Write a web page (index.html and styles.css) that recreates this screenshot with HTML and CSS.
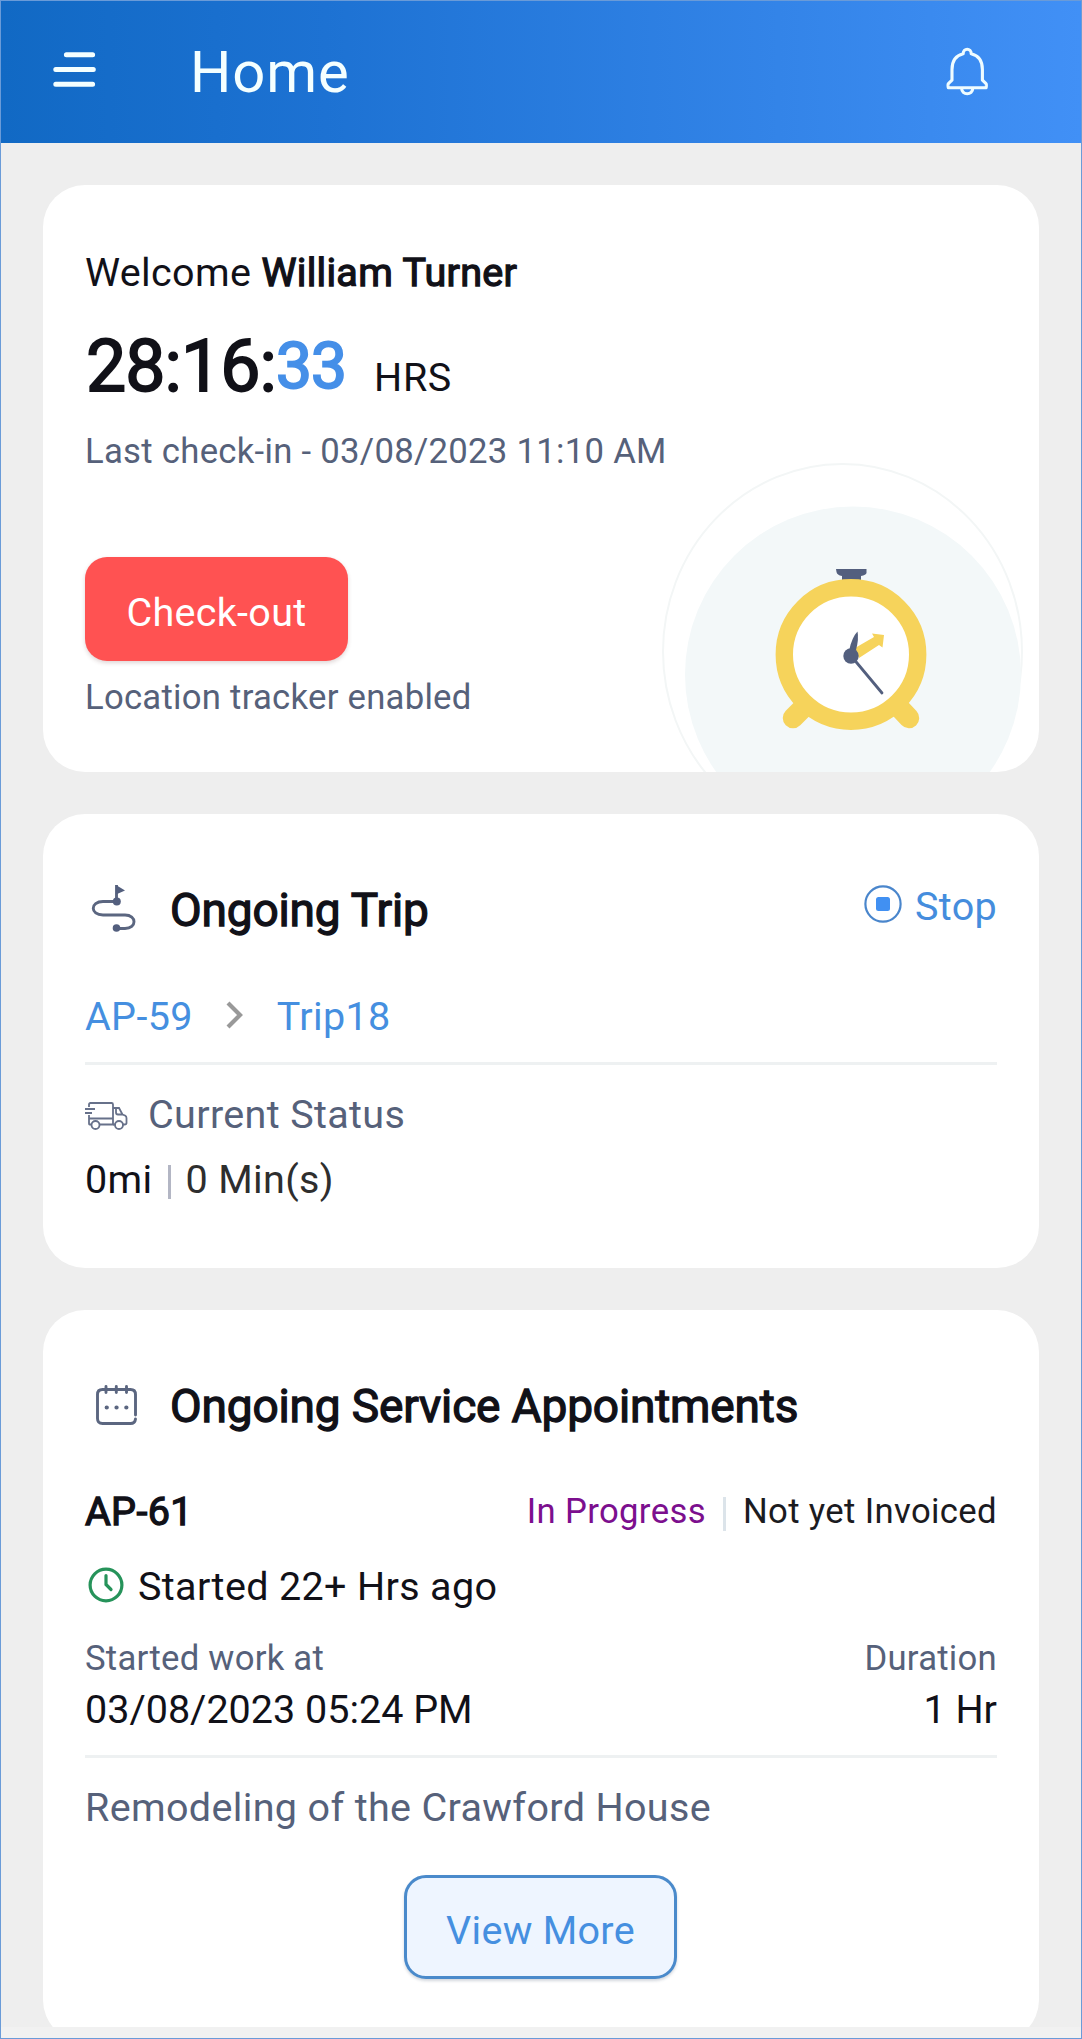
FILE: index.html
```html
<!DOCTYPE html>
<html lang="en">
<head>
<meta charset="utf-8">
<meta name="viewport" content="width=device-width, initial-scale=1">
<title>Home</title>
<link rel="stylesheet" href="styles.css">
</head>
<body>
<div class="screen">
  <header class="topbar">
    <svg class="menu-icon" width="44" height="36" viewBox="0 0 44 36" fill="none" stroke="#f4ffff" stroke-width="5" stroke-linecap="round">
      <path d="M13.4 2.7H39.6M2.8 17.4H40.3M2.8 32.3H39.6"/>
    </svg>
    <h1 class="topbar-title">Home</h1>
    <svg class="bell-icon" width="42" height="50" viewBox="0 0 42 50" fill="none" stroke="#effcff" stroke-width="3.1" stroke-linejoin="round">
      <path d="M17.2 6.7C17.2 .8 25.2 .8 25.2 6.7C32.6 8.4 36.4 14.2 36.4 22.5V33.2L39.8 36.4Q40.6 37.2 40.4 38.8L40.1 40.7H2.3L2 38.8Q1.8 37.2 2.6 36.4L6 33.2V22.5C6 14.2 9.8 8.4 17.2 6.7Z"/>
      <path d="M15.6 41C15.6 48.6 26.8 48.6 26.8 41"/>
    </svg>
  </header>

  <main class="content">
    <section class="card welcome-card">
      <p class="text welcome">Welcome <b class="strong name">William Turner</b></p>
      <p class="timer"><span class="timer-hm">28:16:</span><span class="timer-s">33</span><span class="timer-unit">HRS</span></p>
      <p class="note checkin">Last check-in - 03/08/2023 11:10 AM</p>
      <button class="button checkout" type="button">Check-out</button>
      <p class="note tracker">Location tracker enabled</p>
      <svg class="clock-art" width="378" height="312" viewBox="0 0 378 312">
        <ellipse cx="181.5" cy="191.500" rx="179.500" ry="187.500" fill="none" stroke="#f3f6f6" stroke-width="2"/>
        <circle cx="192" cy="214.500" r="168" fill="#f3f8f9"/>
        <path d="M175 109H205.500V113Q205 115 200 116V122H181V116Q176 115 175.500 112Z" fill="#535f7e"/>
        <path d="M149 241L132 258M232 241L248 258" stroke="#f6d35b" stroke-width="20.500" stroke-linecap="round"/>
        <circle cx="190" cy="194.500" r="66.700" fill="#fff" stroke="#f6d35b" stroke-width="17.400"/>
        <path d="M194 188L213 177L211 173.500L223 175L221.500 187.500L218 185L198 198Z" fill="#f6d35b"/>
        <path d="M188 191Q191 177 196.500 171.500Q198 179 195 190Z" fill="#535f7e"/>
        <circle cx="190" cy="196" r="7.700" fill="#535f7e"/>
        <path d="M191 197L221 233" stroke="#535f7e" stroke-width="2.800" stroke-linecap="round"/>
      </svg>
    </section>

    <section class="card trip-card">
      <div class="card-head">
        <svg class="head-icon" width="50" height="50" viewBox="0 0 50 50" fill="none" stroke="#5b6680" stroke-width="2.900">
          <path d="M31.700 19.500H18C5 19.500 5 33 18 33H40C52 33 52 46.500 40 46.500H31.700"/>
          <path d="M31.500 19V3"/>
          <path d="M31 3L40 8.500L31 12.500Z" fill="#535f7e" stroke="none"/>
          <circle cx="31.800" cy="19.500" r="4" fill="#535f7e" stroke="none"/>
          <circle cx="31.500" cy="46" r="3.800" fill="#535f7e" stroke="none"/>
        </svg>
        <h2 class="heading strong">Ongoing Trip</h2>
        <a class="stop">
          <svg width="38" height="38" viewBox="0 0 38 38"><circle cx="19" cy="19" r="17.600" fill="none" stroke="#4a86cc" stroke-width="2.200"/><rect x="12" y="12" width="14" height="14" rx="2.500" fill="#4190f2"/></svg>
          <span>Stop</span>
        </a>
      </div>
      <p class="crumbs text"><a>AP-59</a>
        <svg width="18" height="28" viewBox="0 0 18 28" fill="none" stroke="#999" stroke-width="4.200"><path d="M2 2L14 14L2 26"/></svg>
        <a>Trip18</a></p>
      <hr class="divider">
      <div class="status text">
        <svg width="43" height="30" viewBox="1 0 43 30" fill="none" stroke="#67718a" stroke-width="1.800">
          <path d="M5 6V3.500Q5 2 6.500 2H27.500Q29 2 29 3.500V23.500H16M7 23.500H5.500Q5 23.500 5 22.500V14M5 17.500H29M1 8H11M1 12H8"/>
          <path d="M29 7H35L38.500 13.500L41 14.500Q42.500 15.300 42.500 17V22Q42.500 23.500 40.500 23.500H39M29 23.500H31M32 7V11.500Q32 13.500 34 13.500H38.500"/>
          <circle cx="11.500" cy="24" r="4"/><circle cx="35" cy="24" r="4"/>
        </svg>
        <span>Current Status</span>
      </div>
      <div class="trip-stats text"><span>0mi</span><i class="bar"></i><span class="mins">0 Min(s)</span></div>
    </section>

    <section class="card service-card">
      <div class="card-head">
        <svg class="head-icon calendar" width="50" height="50" viewBox="0 0 50 50" fill="none" stroke="#5b6680" stroke-width="2.900" stroke-linecap="round">
          <path d="M50.500 34V13.500Q50.500 8.500 45.500 8.500H17.500Q12.500 8.500 12.500 13.500V37.500Q12.500 42.500 17.500 42.500H45.500Q50 42.500 50.500 38"/>
          <path d="M21 5.500V11.500M31.300 5.500V11.500M41.500 5.500V11.500"/>
          <path d="M21.700 26.500H21.800M31.500 26.500H31.600M41.300 26.500H41.400" stroke-width="4.200"/>
        </svg>
        <h2 class="heading strong">Ongoing Service Appointments</h2>
      </div>
      <div class="appointment">
        <span class="text strong ap-id">AP-61</span>
        <span class="progress">In Progress</span><i class="bar pale"></i><span class="invoice">Not yet Invoiced</span>
      </div>
      <p class="started text">
        <svg width="38" height="38" viewBox="0 0 38 38" fill="none" stroke="#26935a" stroke-width="3.200" stroke-linecap="round"><circle cx="19" cy="19" r="15.900"/><path d="M19 9.500V18.500L24 23.500"/></svg>
        <span>Started 22+ Hrs ago</span></p>
      <div class="row note work-labels"><span>Started work at</span><span>Duration</span></div>
      <div class="row text work-values"><span class="date">03/08/2023 05:24 PM</span><span class="hours">1 Hr</span></div>
      <hr class="divider">
      <p class="text project">Remodeling of the Crawford House</p>
      <button class="button view-more" type="button">View More</button>
    </section>
  </main>
  <div class="bottom-strip"></div>
</div>
</body>
</html>
```
FILE: styles.css
```css
* { box-sizing: border-box; }
body { margin: 0; font-family: Roboto, "Liberation Sans", sans-serif; color: #111118; }
h1, h2, p { margin: 0; font-weight: 400; }
svg { display: block; flex: none; overflow: visible; }

.screen {
  display: flex;
  flex-direction: column;
  height: 2039px;
  overflow: hidden;
  background: #eeeeee;
  border: 1px solid #6a9bd8;
}

.topbar {
  display: flex;
  align-items: flex-start;
  flex: none;
  height: 142px;
  padding: 0 93px 0 52px;
  background: linear-gradient(90deg, #1169c4, #1d72d3 30%, #3384e8 72%, #4190f6);
}
.menu-icon { margin-top: 51px; }
.topbar-title {
  flex: 1;
  margin-left: 93px;
  font-size: 58px;
  line-height: 72px;
  letter-spacing: 0.9px;
  color: #f4ffff;
  padding-top: 35px;
}
.bell-icon { margin-top: 46px; }

.content {
  display: flex;
  flex: 1;
  flex-direction: column;
  gap: 42px;
  min-height: 0;
  padding: 42px;
  overflow: hidden;
}
.card {
  position: relative;
  flex: none;
  padding: 0 42px;
  overflow: hidden;
  background: #fff;
  border-radius: 42px;
}
.welcome-card { height: 587px; padding-top: 62px; }
.trip-card { height: 454px; padding-top: 66px; }
.service-card { height: 732px; padding-top: 66px; }

.text { font-size: 39.5px; line-height: 52px; letter-spacing: 0.35px; white-space: nowrap; }
.note { font-size: 34.7px; line-height: 44px; letter-spacing: 0.25px; color: #56617a; white-space: nowrap; }
.strong { font-weight: 400; -webkit-text-stroke: 1.3px currentColor; }
.name { letter-spacing: 0.3px; }

.timer { display: flex; align-items: baseline; height: 84px; margin-top: 26px; line-height: 84px; white-space: nowrap; }
.timer-hm { margin-left: 1px; font-size: 71.5px; letter-spacing: -0.9px; -webkit-text-stroke: 1.8px currentColor; }
.timer-s { position: relative; top: -3px; font-size: 64px; letter-spacing: -0.9px; color: #458fe8; -webkit-text-stroke: 2px currentColor; }
.timer-unit { margin-left: 28px; font-size: 39.5px; letter-spacing: 0.6px; }
.checkin { margin-top: 20px; letter-spacing: 0.28px; }

.button {
  display: block;
  height: 104px;
  border-radius: 22px;
  font-family: inherit;
  font-size: 39.5px;
  line-height: 52px;
  letter-spacing: 0.3px;
  text-align: center;
  white-space: nowrap;
}
.checkout {
  width: 263px;
  margin-top: 84px;
  padding: 8px 0 0;
  color: #fff;
  background: #ff5252;
  border: 0;
  box-shadow: 0 2px 4px rgba(80, 30, 30, 0.18);
}
.tracker { margin-top: 14px; }
.clock-art { position: absolute; right: 0; bottom: 0; }

.card-head { display: flex; align-items: flex-start; height: 60px; }
.heading { flex: 1; margin-left: 35px; font-size: 46px; line-height: 60px; letter-spacing: -0.15px; white-space: nowrap; }
.head-icon { margin-top: 2px; }
.head-icon.calendar { margin-top: 5px; }
.stop { display: flex; gap: 13px; font-size: 39.5px; line-height: 54px; letter-spacing: 0.3px; color: #458ddd; }
.stop svg { margin-top: 5px; }

.crumbs { display: flex; align-items: center; margin-top: 51px; color: #458fe0; }
.crumbs svg { margin: 0 33px 5px 33px; }
.divider { height: 3px; margin: 19px 0 24px; background: #eef1f2; border: 0; }
.status { display: flex; align-items: center; gap: 20px; color: #56617a; }
.status svg { margin-top: 1px; }
.trip-stats { display: flex; align-items: center; margin-top: 13px; }
.bar { width: 3px; height: 34px; margin: 3px 15px 0 15px; background: #b3b6c4; }
.mins { color: #2e2e2e; }

.appointment { display: flex; align-items: baseline; height: 52px; margin-top: 50px; font-size: 34.7px; line-height: 52px; letter-spacing: 0.35px; white-space: nowrap; }
.ap-id { flex: 1; }
.progress { position: relative; top: -2px; color: #7c0f8e; }
.invoice { position: relative; top: -2px; color: #1b1b1f; }
.bar.pale { align-self: flex-start; margin: 11px 17px 0; background: #dce4ea; }
.started { display: flex; align-items: center; gap: 14px; margin-top: 23px; }
.started svg { margin: 0 0 5px 2px; }
.started span { margin-left: -1px; }
.row { display: flex; justify-content: space-between; }
.work-labels { margin-top: 23px; }
.work-values { margin-top: 4px; letter-spacing: 0; }
.project { color: #56617a; }
.view-more {
  width: 273px;
  margin: 41px auto 0 319px;
  padding: 7px 0 0;
  color: #458fe0;
  background: #eef5ff;
  border: 3px solid #4a8acb;
  box-shadow: 0 2px 3px rgba(40, 60, 90, 0.2);
}

.bottom-strip { flex: none; height: 11px; background: #f1f1f1; }
```
